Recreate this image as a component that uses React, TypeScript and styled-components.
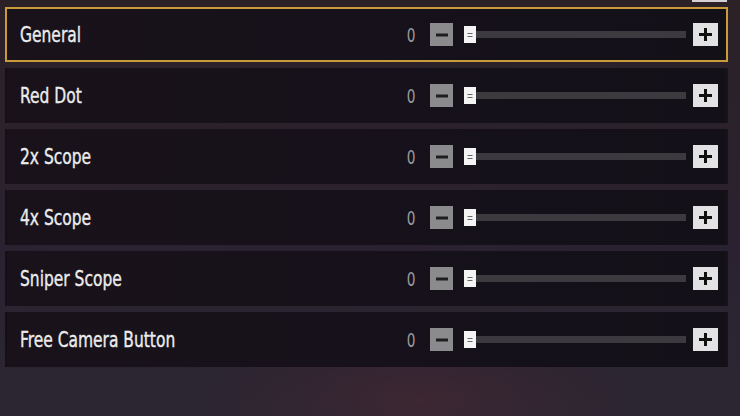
import React from "react";
import styled, { createGlobalStyle } from "styled-components";

const Global = createGlobalStyle`
  html, body { margin: 0; padding: 0; }
  body {
    width: 740px;
    height: 416px;
    overflow: hidden;
    background:
      radial-gradient(ellipse 300px 120px at 420px 400px, rgba(90, 40, 50, 0.35), transparent 70%),
      linear-gradient(180deg, #2c2127 0%, #2a2230 60%, #2c2632 100%);
    font-family: "DejaVu Sans Condensed", "DejaVu Sans", sans-serif;
  }
`;

const Page = styled.div`
  display: flex;
  flex-direction: column;
  width: 740px;
  height: 416px;
  box-sizing: border-box;
  padding: 0 12px 0 5px;
`;

const TopStrip = styled.div`
  display: flex;
  justify-content: flex-end;
  height: 7px;
  padding-right: 1px;
`;

const TopButtonEdge = styled.div`
  width: 35px;
  height: 2px;
  background: #d6cfd6;
`;

const List = styled.div`
  display: flex;
  flex-direction: column;
  gap: 6px;
`;

const Row = styled.div<{ $active?: boolean }>`
  display: flex;
  align-items: center;
  height: 55px;
  box-sizing: border-box;
  padding: 0 8px 0 13px;
  background: linear-gradient(90deg, #19121a 0%, #16111a 50%, #131018 100%);
  border: 2px solid ${(p) => (p.$active ? "#c99b3a" : "transparent")};
`;

const Label = styled.div`
  flex: 1;
  color: #ececec;
  font-size: 21px;
  transform: scaleX(0.82);
  transform-origin: left center;
  white-space: nowrap;
  -webkit-text-stroke: 0.35px #ececec;
`;

const Value = styled.div`
  color: #9a9a9a;
  font-size: 19px;
  transform: scaleX(0.8);
  width: 12px;
  margin-right: 13px;
  text-align: center;
`;

const StepButton = styled.div<{ $kind: "minus" | "plus" }>`
  width: ${(p) => (p.$kind === "plus" ? "25px" : "23px")};
  height: 23px;
  display: flex;
  align-items: center;
  justify-content: center;
  background: ${(p) => (p.$kind === "plus" ? "#e2e2e4" : "#8b8b8d")};
  margin-left: ${(p) => (p.$kind === "plus" ? "7px" : "0")};
`;

const Slider = styled.div`
  display: flex;
  align-items: center;
  width: 222px;
  margin-left: 11px;
`;

const Thumb = styled.div`
  width: 12px;
  height: 17px;
  background: #f4f4f4;
  display: flex;
  align-items: center;
  justify-content: center;
  flex-shrink: 0;
`;

const Track = styled.div`
  flex: 1;
  height: 7px;
  background: #3c3a3e;
`;

const Grip = () => (
  <svg width="6" height="6" viewBox="0 0 6 6">
    <rect x="0.5" y="1" width="5" height="1" fill="#666" />
    <rect x="0.5" y="4" width="5" height="1" fill="#666" />
  </svg>
);

const MinusIcon = () => (
  <svg width="14" height="14" viewBox="0 0 14 14">
    <rect x="1" y="5.5" width="12" height="3" fill="#1e1e1e" />
  </svg>
);

const PlusIcon = () => (
  <svg width="15" height="15" viewBox="0 0 15 15">
    <rect x="1" y="6" width="13" height="3" fill="#111" />
    <rect x="6" y="1" width="3" height="13" fill="#111" />
  </svg>
);

const items = ["General", "Red Dot", "2x Scope", "4x Scope", "Sniper Scope", "Free Camera Button"];

export default function App() {
  return (
    <>
      <Global />
      <Page>
        <TopStrip>
          <TopButtonEdge />
        </TopStrip>
        <List>
          {items.map((name, i) => (
            <Row key={name} $active={i === 0}>
              <Label>{name}</Label>
              <Value>0</Value>
              <StepButton $kind="minus">
                <MinusIcon />
              </StepButton>
              <Slider>
                <Thumb>
                  <Grip />
                </Thumb>
                <Track />
              </Slider>
              <StepButton $kind="plus">
                <PlusIcon />
              </StepButton>
            </Row>
          ))}
        </List>
      </Page>
    </>
  );
}
